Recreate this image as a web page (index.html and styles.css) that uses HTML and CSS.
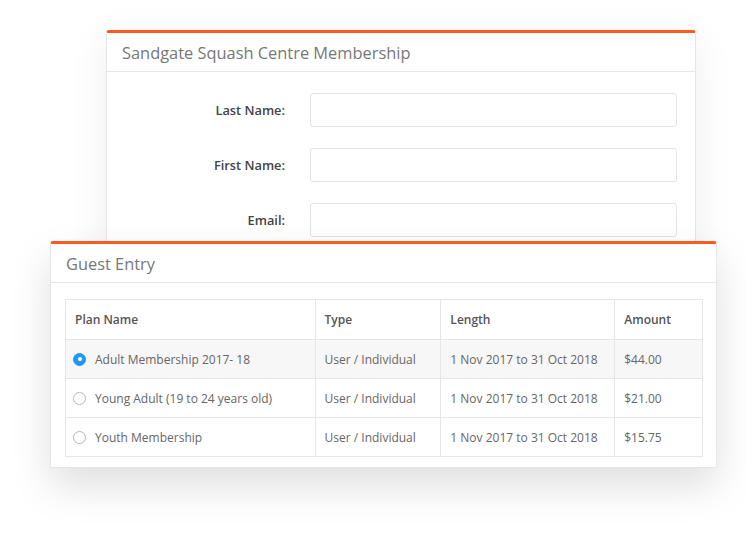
FILE: index.html
```html
<!DOCTYPE html>
<html>
<head>
<meta charset="utf-8">
<link rel="stylesheet" href="styles.css">
</head>
<body>
<div class="stage">
  <section class="card card-back">
    <header class="card-head">Sandgate Squash Centre Membership</header>
    <div class="form">
      <div class="form-row"><label class="form-label">Last Name:</label><div class="input"></div></div>
      <div class="form-row"><label class="form-label">First Name:</label><div class="input"></div></div>
      <div class="form-row"><label class="form-label">Email:</label><div class="input"></div></div>
      <div class="form-row"><label class="form-label">Phone:</label><div class="input"></div></div>
    </div>
  </section>
  <section class="card card-front">
    <header class="card-head">Guest Entry</header>
    <div class="card-body">
      <table class="plans">
        <colgroup><col class="c1"><col class="c2"><col class="c3"><col class="c4"></colgroup>
        <thead>
          <tr><th>Plan Name</th><th>Type</th><th>Length</th><th>Amount</th></tr>
        </thead>
        <tbody>
          <tr class="selected"><td><span class="radio on"></span>Adult Membership 2017- 18</td><td>User / Individual</td><td>1 Nov 2017 to 31 Oct 2018</td><td>$44.00</td></tr>
          <tr><td><span class="radio"></span>Young Adult (19 to 24 years old)</td><td>User / Individual</td><td>1 Nov 2017 to 31 Oct 2018</td><td>$21.00</td></tr>
          <tr><td><span class="radio"></span>Youth Membership</td><td>User / Individual</td><td>1 Nov 2017 to 31 Oct 2018</td><td>$15.75</td></tr>
        </tbody>
      </table>
    </div>
  </section>
</div>
</body>
</html>
```
FILE: styles.css
```css
* { box-sizing: border-box; }
html, body { margin: 0; padding: 0; background: #fff; }
body { font-family: "Open Sans", "Noto Sans", sans-serif; width: 747px; height: 539px; overflow: hidden; }
.stage { padding-top: 30px; }
.card {
  background: #fff;
  border: 1px solid #e6e6e6;
  border-top: 3px solid #fd5a22;
  border-radius: 3px 3px 0 0;
}
.card-back {
  margin-left: 106px;
  width: 590px;
  height: 240px;
  box-shadow: 0 8px 40px rgba(0,0,0,0.07);
}
.card-front {
  position: relative;
  margin-left: 50px;
  margin-top: -29px;
  width: 667px;
  box-shadow: 0 18px 40px rgba(0,0,0,0.13);
}
.card-head {
  height: 39px;
  line-height: 39px;
  padding-left: 15px;
  font-size: 16.4px;
  color: #777;
  border-bottom: 1px solid #e6e6e6;
  overflow: hidden;
}
.form { padding: 21px 18px 0 0; display: flex; flex-direction: column; gap: 21px; }
.form-row { display: flex; align-items: center; }
.form-label {
  width: 178px;
  text-align: right;
  font-size: 12.8px;
  font-weight: 600;
  color: #444;
}
.input {
  margin-left: 25px;
  flex: 1;
  height: 34px;
  border: 1px solid #e3e3e3;
  border-radius: 3px;
  background: #fff;
}
.card-body { padding: 16px 13px 10px 14px; }
.plans {
  width: 638px;
  border-collapse: collapse;
  font-size: 12px;
  color: #666;
}
.c1 { width: 250px; } .c2 { width: 126px; } .c3 { width: 174px; } .c4 { width: 88px; }
.plans th, .plans td {
  border: 1px solid #e6e6e6;
  text-align: left;
  padding: 0 9px;
  white-space: nowrap;
}
.plans th { height: 40px; font-weight: 600; color: #555; }
.plans td { height: 39px; }
.plans tr.selected td { background: #f7f7f7; }
.radio {
  display: inline-block;
  width: 13px;
  height: 13px;
  border: 1px solid #b5b5b5;
  border-radius: 50%;
  background: #fff;
  vertical-align: -2px;
  margin-left: -2px;
  margin-right: 9px;
  position: relative;
}
.radio.on { background: #2196f3; border-color: #2196f3; }
.radio.on::after {
  content: "";
  position: absolute;
  left: 3.5px; top: 3.5px;
  width: 4px; height: 4px;
  border-radius: 50%;
  background: #fff;
}
```
